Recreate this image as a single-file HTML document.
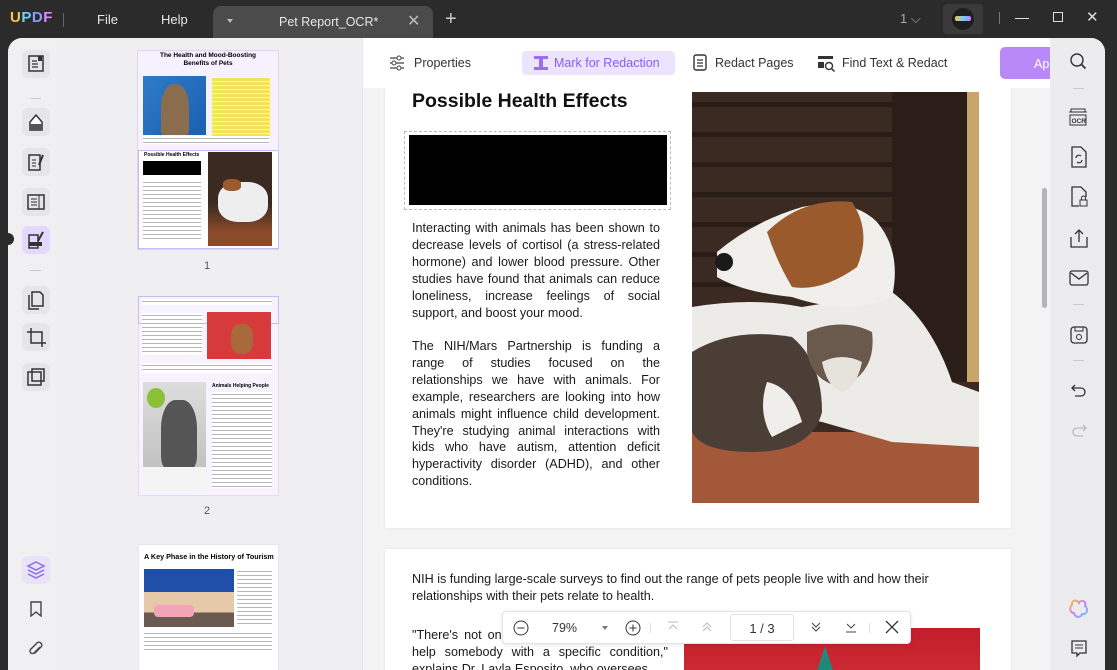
<!DOCTYPE html>
<html><head><meta charset="utf-8"><style>
*{margin:0;padding:0;box-sizing:border-box}
body{width:1117px;height:670px;overflow:hidden;background:#2b2b2b;font-family:"Liberation Sans",Arial,sans-serif;position:relative}
.abs{position:absolute}
.tb{color:#e8e8e8;font-size:13px}
.main{left:8px;top:38px;width:1097px;height:632px;background:#f0f0f2;border-radius:14px 14px 0 0;overflow:hidden}
.rail{left:0;top:0;width:54px;height:632px;background:#f0f0f2}
.thumbs{left:54px;top:0;width:301px;height:632px;background:#efeff1;border-right:1px solid #e6e6e8}
.ico{position:absolute;left:14px;width:28px;height:28px;border-radius:6px}
.tool{top:0;left:355px;width:687px;height:50px;background:#fff}
.doc{left:355px;top:50px;width:687px;height:582px;background:#f3f3f3;overflow:hidden}
.page{position:absolute;background:#fff;box-shadow:0 0 3px rgba(0,0,0,.08)}
.txt{font-size:12.6px;line-height:16.9px;color:#1a1a1a;text-align:justify;font-family:"Liberation Sans",Arial,sans-serif}
.rr{left:1042px;top:0;width:55px;height:632px;background:#ececef}
.lines{background:repeating-linear-gradient(#fff 0 2px,#b8b8b8 2px 3px,#fff 3px 4px)}
</style></head><body>
<div class="abs" style="left:10px;top:9px;font-weight:bold;font-size:15px;letter-spacing:0.5px"><span style="color:#f5c542">U</span><span style="color:#6fd0ff">P</span><span style="color:#8a9bff">D</span><span style="color:#d98bff">F</span></div>
<div class="abs" style="left:63px;top:13px;width:1px;height:14px;background:#666"></div>
<div class="abs tb" style="left:97px;top:12px">File</div>
<div class="abs tb" style="left:161px;top:12px">Help</div>
<div class="abs" style="left:213px;top:6px;width:220px;height:34px;background:#4b4b4b;border-radius:8px 8px 0 0"></div>
<div class="abs" style="left:227px;top:19px;width:0;height:0;border-left:3px solid transparent;border-right:3px solid transparent;border-top:4px solid #bbb"></div>
<div class="abs tb" style="left:279px;top:15px;font-size:12.5px">Pet Report_OCR*</div>
<div class="abs" style="left:407px;top:11px;color:#bbb;font-size:16px">✕</div>
<div class="abs" style="left:445px;top:8px;color:#ccc;font-size:20px;font-weight:300">+</div>
<div class="abs tb" style="left:900px;top:11px;color:#aaa">1 ⌵</div>
<div class="abs" style="left:943px;top:4px;width:40px;height:30px;background:#3a3a3a;border-radius:4px"></div>
<div class="abs" style="left:952px;top:8px;width:22px;height:22px;border-radius:50%;background:#1e1e1e"></div>
<div class="abs" style="left:955px;top:16px;width:16px;height:5px;background:linear-gradient(90deg,#f5c542,#6fd0ff,#c77dff);border-radius:2px"></div>
<div class="abs" style="left:999px;top:12px;width:1px;height:12px;background:#777"></div>
<div class="abs" style="left:1015px;top:18px;width:14px;height:1px;background:#ddd"></div>
<div class="abs" style="left:1053px;top:12px;width:10px;height:10px;border:1px solid #ddd"></div>
<div class="abs" style="left:1086px;top:8px;color:#ddd;font-size:15px">✕</div>

<div class="abs main">
 <div class="abs rail">
  <div class="ico" style="top:12px;background:#e6e6ea"><svg width="28" height="28"><rect x="7" y="6" width="14" height="15" fill="none" stroke="#333" stroke-width="1.5"/><path d="M10 11h5M10 14h6M10 17h6" stroke="#333" stroke-width="1.3"/><rect x="16" y="6" width="4" height="5" fill="#333"/></svg></div>
  <div class="abs" style="left:22px;top:60px;width:11px;height:1px;background:#ccc"></div>
  <div class="ico" style="top:70px;background:#e6e6ea"><svg width="28" height="28"><path d="M8 22V14l6-7 6 7v8z" fill="#fff" stroke="#333" stroke-width="1.5"/><rect x="8" y="16" width="12" height="6" fill="#555"/></svg></div>
  <div class="ico" style="top:110px;background:#e6e6ea"><svg width="28" height="28"><path d="M7 7h11v15H7z" fill="none" stroke="#333" stroke-width="1.5"/><path d="M10 12h4M10 15h4M10 18h4" stroke="#333"/><path d="M17 17l4-10" stroke="#333" stroke-width="2"/></svg></div>
  <div class="ico" style="top:150px;background:#e6e6ea"><svg width="28" height="28"><rect x="6" y="7" width="16" height="14" fill="none" stroke="#333" stroke-width="1.5"/><path d="M9 11h6M9 14h6M9 17h6M17 7v14" stroke="#333"/></svg></div>
  <div class="abs" style="left:0;top:195px;width:6px;height:12px;background:#2b2b2b;border-radius:0 6px 6px 0"></div>
  <div class="ico" style="top:188px;background:#e3d9ff"><svg width="28" height="28"><path d="M7 9h9v13H7z" fill="none" stroke="#333" stroke-width="1.5"/><rect x="7" y="16" width="13" height="4" fill="#333"/><path d="M16 15l5-9" stroke="#333" stroke-width="2"/></svg></div>
  <div class="abs" style="left:22px;top:232px;width:11px;height:1px;background:#ccc"></div>
  <div class="ico" style="top:248px;background:#e6e6ea"><svg width="28" height="28"><path d="M10 6h8l3 3v11h-11z M7 9v14h10" fill="none" stroke="#333" stroke-width="1.5"/></svg></div>
  <div class="ico" style="top:285px;background:#e6e6ea"><svg width="28" height="28"><path d="M9 5v15h15M5 9h15v15" fill="none" stroke="#333" stroke-width="1.5"/></svg></div>
  <div class="ico" style="top:325px;background:#e6e6ea"><svg width="28" height="28"><rect x="6" y="9" width="13" height="13" fill="none" stroke="#333" stroke-width="1.5"/><rect x="10" y="6" width="12" height="12" fill="none" stroke="#333" stroke-width="1.5"/></svg></div>
  <div class="ico" style="top:518px;background:#e8e3f7"><svg width="28" height="28"><path d="M14 6l8 4-8 4-8-4z" fill="none" stroke="#8a6df0" stroke-width="1.5"/><path d="M6 14l8 4 8-4M6 18l8 4 8-4" fill="none" stroke="#8a6df0" stroke-width="1.5"/></svg></div>
  <svg class="abs" style="left:22px;top:563px" width="12" height="16"><path d="M1 1h10v14l-5-4-5 4z" fill="none" stroke="#444" stroke-width="1.4"/></svg>
  <svg class="abs" style="left:20px;top:602px" width="16" height="18"><path d="M12 7l-6 6a2.5 2.5 0 01-3.5-3.5l7-7a3 3 0 014 4l-7 7" fill="none" stroke="#444" stroke-width="1.4"/></svg>
 </div>
 <div class="abs thumbs">
  <div class="abs" style="left:75px;top:12px;width:142px;height:200px;background:#f5f1ff;border:1px solid #ddd5f3"></div>
  <div class="abs" style="left:78px;top:14px;width:136px;font-size:6.5px;font-weight:bold;text-align:center;line-height:8px">The Health and Mood-Boosting<br>Benefits of Pets</div>
  <div class="abs" style="left:81px;top:38px;width:63px;height:59px;background:linear-gradient(135deg,#2e7cc9,#1b5fb0)"><div style="position:absolute;left:18px;top:8px;width:28px;height:51px;background:#8a6d4d;border-radius:45% 45% 10% 10%"></div></div>
  <div class="abs" style="left:150px;top:40px;width:58px;height:58px;background:repeating-linear-gradient(#f2e45a 0 3px,#faf5c0 3px 4px)"></div>
  <div class="abs lines" style="left:81px;top:98px;width:126px;height:8px"></div>
  <div class="abs" style="left:76px;top:112px;width:141px;height:99px;background:#fff;border:1px solid #c9b9f5"></div>
  <div class="abs" style="left:82px;top:114px;font-size:5px;font-weight:bold">Possible Health Effects</div>
  <div class="abs" style="left:81px;top:123px;width:58px;height:14px;background:#000"></div>
  <div class="abs lines" style="left:81px;top:142px;width:58px;height:60px"></div>
  <div class="abs" style="left:146px;top:114px;width:64px;height:94px;background:linear-gradient(#3a2a22 0 55%,#8b4a2a 85%)"><div style="position:absolute;left:10px;top:30px;width:50px;height:40px;background:#eee;border-radius:40%"></div><div style="position:absolute;left:15px;top:27px;width:18px;height:12px;background:#9a5a2c;border-radius:40%"></div></div>
  <div class="abs" style="left:142px;top:222px;font-size:11px;color:#555">1</div>
  <div class="abs" style="left:76px;top:258px;width:141px;height:200px;background:#f6f3ff;border:1px solid #e3dbf7"></div>
  <div class="abs" style="left:76px;top:258px;width:141px;height:28px;border:1px solid #c9b9f5"></div>
  <div class="abs lines" style="left:80px;top:261px;width:130px;height:6px"></div>
  <div class="abs lines" style="left:80px;top:275px;width:60px;height:42px"></div>
  <div class="abs" style="left:145px;top:274px;width:64px;height:47px;background:#d63a3a"><div style="position:absolute;left:24px;top:12px;width:22px;height:30px;background:#a86a3a;border-radius:40%"></div></div>
  <div class="abs lines" style="left:80px;top:325px;width:130px;height:10px"></div>
  <div class="abs" style="left:81px;top:344px;width:63px;height:108px;background:linear-gradient(#ddd,#bbb)"><div style="position:absolute;left:18px;top:18px;width:36px;height:70px;background:#555;border-radius:40% 40% 20% 20%"></div><div style="position:absolute;left:4px;top:6px;width:18px;height:20px;background:#8cbf3a;border-radius:50%"></div><div style="position:absolute;left:0;top:85px;width:63px;height:23px;background:#f4f4f4"></div></div>
  <div class="abs" style="left:150px;top:345px;font-size:5px;font-weight:bold">Animals Helping People</div>
  <div class="abs lines" style="left:150px;top:354px;width:60px;height:96px"></div>
  <div class="abs" style="left:142px;top:467px;font-size:11px;color:#555">2</div>
  <div class="abs" style="left:76px;top:506px;width:141px;height:140px;background:#fff;border:1px solid #e6e6e6"></div>
  <div class="abs" style="left:82px;top:514px;font-size:7.2px;font-weight:bold">A Key Phase in the History of Tourism</div>
  <div class="abs" style="left:82px;top:531px;width:90px;height:58px;background:linear-gradient(#1f4fa8 0 40%,#e6c9a8 40% 75%,#6a5a50 75%)"><div style="position:absolute;left:10px;top:36px;width:40px;height:12px;background:#f2a5b8;border-radius:4px"></div></div>
  <div class="abs lines" style="left:175px;top:531px;width:35px;height:58px"></div>
  <div class="abs lines" style="left:82px;top:593px;width:128px;height:20px"></div>
 </div>
 <div class="abs tool">
  <svg class="abs" style="left:26px;top:17px" width="16" height="16"><path d="M1 3h14M1 8h14M1 13h14" stroke="#444" stroke-width="1.2"/><circle cx="10" cy="3" r="2" fill="#fff" stroke="#444"/><circle cx="5" cy="8" r="2" fill="#fff" stroke="#444"/><circle cx="10" cy="13" r="2" fill="#fff" stroke="#444"/></svg>
  <div class="abs" style="left:51px;top:18px;font-size:12.5px;color:#333">Properties</div>
  <div class="abs" style="left:159px;top:13px;width:153px;height:24px;background:#ece3ff;border-radius:4px"></div>
  <svg class="abs" style="left:170px;top:17px" width="16" height="16"><rect x="1" y="1" width="14" height="3" fill="#9b6df0"/><rect x="6" y="4" width="4" height="8" fill="#9b6df0"/><rect x="1" y="12" width="14" height="3" fill="#9b6df0"/></svg>
  <div class="abs" style="left:191px;top:18px;font-size:12.5px;color:#8b5cf0">Mark for Redaction</div>
  <svg class="abs" style="left:329px;top:16px" width="16" height="18"><rect x="2" y="1" width="12" height="15" rx="2" fill="none" stroke="#333" stroke-width="1.4"/><path d="M5 6h6M5 9h6M5 12h6" stroke="#333" stroke-width="1.3"/></svg>
  <div class="abs" style="left:352px;top:18px;font-size:12.5px;color:#333">Redact Pages</div>
  <svg class="abs" style="left:454px;top:16px" width="20" height="18"><rect x="1" y="2" width="15" height="3" fill="#333"/><rect x="1" y="8" width="6" height="6" fill="#333"/><circle cx="12" cy="12" r="3.5" fill="none" stroke="#333" stroke-width="1.4"/><path d="M14.5 14.5l3 3" stroke="#333" stroke-width="1.5"/></svg>
  <div class="abs" style="left:479px;top:18px;font-size:12.5px;color:#333">Find Text &amp; Redact</div>
  <div class="abs" style="left:637px;top:9px;width:60px;height:32px;background:#b98af7;border-radius:5px;color:#fff;font-size:12.5px;padding:10px 0 0 34px">Ap</div>
 </div>
 <div class="abs doc">
  <div class="page" style="left:22px;top:0;width:626px;height:440px">
   <div class="abs" style="left:27px;top:2px;font-size:19.5px;font-weight:bold;color:#111">Possible Health Effects</div>
   <div class="abs" style="left:19px;top:43px;width:267px;height:79px;border:1px dashed #bbb"></div>
   <div class="abs" style="left:24px;top:47px;width:258px;height:70px;background:#000"></div>
   <div class="abs txt" style="left:27px;top:132px;width:248px">Interacting with animals has been shown to decrease levels of cortisol (a stress-related hormone) and lower blood pressure. Other studies have found that animals can reduce loneliness, increase feelings of social support, and boost your mood.</div>
   <div class="abs txt" style="left:27px;top:250px;width:248px">The NIH/Mars Partnership is funding a range of studies focused on the relationships we have with animals. For example, researchers are looking into how animals might influence child development. They're studying animal interactions with kids who have autism, attention deficit hyperactivity disorder (ADHD), and other conditions.</div>
   <svg class="abs" style="left:307px;top:4px" width="287" height="411" viewBox="0 0 287 411">
    <rect width="287" height="411" fill="#3b2a22"/>
    <g fill="#2a1c16"><rect y="10" width="200" height="5"/><rect y="40" width="200" height="5"/><rect y="70" width="200" height="5"/><rect y="100" width="200" height="5"/><rect y="130" width="200" height="5"/><rect y="160" width="200" height="5"/><rect y="190" width="200" height="5"/></g>
    <rect x="200" width="75" height="290" fill="#2b1d17"/>
    <rect x="275" width="12" height="290" fill="#c9a56a"/>
    <rect y="340" width="287" height="71" fill="#a3583a"/>
    <path d="M0 215 Q60 205 110 215 L200 200 Q240 230 260 290 L287 300 L287 355 L200 350 L130 330 L0 300z" fill="#ecebe8"/>
    <path d="M25 160 Q60 130 110 115 Q160 105 185 130 Q210 160 200 205 Q160 225 100 205 Q50 200 25 185z" fill="#f0efec"/>
    <path d="M75 140 Q110 105 160 110 Q180 140 165 175 Q130 200 100 195 Q85 170 75 140z" fill="#9a5a2c"/>
    <circle cx="32" cy="170" r="9" fill="#1a1a1a"/>
    <path d="M0 260 Q40 235 100 245 Q130 270 130 320 Q120 360 60 360 Q10 360 0 340z" fill="#4a3e36"/>
    <path d="M115 240 Q150 225 180 240 Q185 280 150 295 Q120 290 115 260z" fill="#6a5a4e"/>
    <path d="M130 270 Q150 260 170 270 Q165 295 150 300 Q135 295 130 270z" fill="#e6e2dc"/>
    <path d="M75 290 Q100 295 110 330 L80 345 Q65 320 75 290z" fill="#efeeeb"/>
   </svg>
  </div>
  <div class="page" style="left:22px;top:461px;width:626px;height:200px">
   <div class="abs" style="left:27px;top:22px;width:560px;font-size:12.6px;line-height:17px;color:#1a1a1a">NIH is funding large-scale surveys to find out the range of pets people live with and how their relationships with their pets relate to health.</div>
   <div class="abs txt" style="left:27px;top:78px;width:256px">"There's not one answer for how a pet can help somebody with a specific condition," explains Dr. Layla Esposito, who oversees</div>
   <div class="abs" style="left:299px;top:79px;width:296px;height:100px;background:linear-gradient(#c21e2a,#d8383f)"><div style="position:absolute;left:128px;top:18px;width:26px;height:40px;background:#1e8a7a;clip-path:polygon(50% 0,100% 100%,0 100%)"></div></div>
  </div>
  <div class="abs" style="left:139px;top:523px;width:409px;height:33px;background:#fff;border:1px solid #e4e4e4;border-radius:4px;box-shadow:0 1px 4px rgba(0,0,0,.1)"></div>
  <svg class="abs" style="left:150px;top:532px" width="16" height="16"><circle cx="8" cy="8" r="7" fill="none" stroke="#333"/><path d="M4.5 8h7" stroke="#333"/></svg>
  <div class="abs" style="left:189px;top:533px;font-size:12.5px;color:#333">79%</div>
  <div class="abs" style="left:239px;top:538px;width:0;height:0;border-left:3px solid transparent;border-right:3px solid transparent;border-top:4px solid #777"></div>
  <svg class="abs" style="left:262px;top:532px" width="16" height="16"><circle cx="8" cy="8" r="7" fill="none" stroke="#333"/><path d="M4.5 8h7M8 4.5v7" stroke="#333"/></svg>
  <div class="abs" style="left:287px;top:535px;width:1px;height:10px;background:#ddd"></div>
  <svg class="abs" style="left:304px;top:533px" width="12" height="12"><path d="M1 1h10M2 8l4-4 4 4" fill="none" stroke="#bbb"/></svg>
  <svg class="abs" style="left:338px;top:533px" width="12" height="12"><path d="M2 6l4-4 4 4M2 10l4-4 4 4" fill="none" stroke="#bbb"/></svg>
  <div class="abs" style="left:367px;top:526px;width:64px;height:27px;border:1px solid #e2e2e2;border-radius:3px;font-size:13px;color:#333;text-align:center;padding-top:6px">1 / 3</div>
  <svg class="abs" style="left:447px;top:533px" width="12" height="13"><path d="M2 2l4 4 4-4M2 6l4 4 4-4" fill="none" stroke="#444"/></svg>
  <svg class="abs" style="left:482px;top:533px" width="12" height="13"><path d="M2 3l4 4 4-4M1 11h10" fill="none" stroke="#444"/></svg>
  <div class="abs" style="left:506px;top:535px;width:1px;height:10px;background:#ddd"></div>
  <svg class="abs" style="left:522px;top:532px" width="14" height="14"><path d="M1 1l12 12M13 1L1 13" stroke="#333" stroke-width="1.3"/></svg>
 </div>
 <div class="abs" style="left:1034px;top:150px;width:5px;height:120px;background:#b5b5b5;border-radius:3px"></div>
 <div class="abs rr">
  <svg class="abs" style="left:19px;top:14px" width="20" height="20"><circle cx="8" cy="8" r="6" fill="none" stroke="#333" stroke-width="1.4"/><path d="M12.5 12.5l4 4" stroke="#333" stroke-width="1.8"/></svg>
  <div class="abs" style="left:23px;top:50px;width:11px;height:1px;background:#ccc"></div>
  <svg class="abs" style="left:18px;top:68px" width="20" height="22"><path d="M3 6V3h14v3M1 6h18" fill="none" stroke="#333"/><rect x="2" y="9" width="16" height="10" fill="none" stroke="#333"/><text x="3.5" y="17" font-size="6.5" font-family="Liberation Sans" font-weight="bold" fill="#333">OCR</text></svg>
  <svg class="abs" style="left:20px;top:108px" width="18" height="22"><path d="M2 1h9l5 5v15H2z" fill="none" stroke="#333" stroke-width="1.3"/><path d="M6 12a3 3 0 015-2M12 14a3 3 0 01-5 2" fill="none" stroke="#333" stroke-width="1.2"/></svg>
  <svg class="abs" style="left:20px;top:148px" width="18" height="22"><path d="M9 20H2V1h9l5 5v5" fill="none" stroke="#333" stroke-width="1.3"/><rect x="10" y="14" width="7" height="6" fill="none" stroke="#333"/><path d="M11.5 14v-2a2 2 0 014 0v2" fill="none" stroke="#333"/></svg>
  <svg class="abs" style="left:20px;top:190px" width="18" height="20"><path d="M1 9v10h16V9M9 14V2M5 6l4-4 4 4" fill="none" stroke="#333" stroke-width="1.3"/></svg>
  <svg class="abs" style="left:19px;top:232px" width="20" height="16"><rect x="1" y="1" width="18" height="14" rx="2" fill="none" stroke="#333" stroke-width="1.3"/><path d="M2 3l8 6 8-6" fill="none" stroke="#333" stroke-width="1.3"/></svg>
  <div class="abs" style="left:23px;top:266px;width:11px;height:1px;background:#ccc"></div>
  <svg class="abs" style="left:20px;top:288px" width="18" height="18"><rect x="1" y="1" width="16" height="16" rx="3" fill="none" stroke="#333" stroke-width="1.3"/><path d="M5 1v4h8V1" fill="none" stroke="#333"/><circle cx="9" cy="11" r="2.5" fill="none" stroke="#333"/></svg>
  <div class="abs" style="left:23px;top:322px;width:11px;height:1px;background:#ccc"></div>
  <svg class="abs" style="left:21px;top:346px" width="16" height="14"><path d="M4 1L1 4l3 3M1 4h9a4 4 0 010 8H4" fill="none" stroke="#333" stroke-width="1.3"/></svg>
  <svg class="abs" style="left:21px;top:386px" width="16" height="14"><path d="M12 1l3 3-3 3M15 4H6a4 4 0 000 8h6" fill="none" stroke="#bbb" stroke-width="1.3"/></svg>
  <svg class="abs" style="left:19px;top:561px" width="20" height="20"><defs><linearGradient id="g" x1="0" y1="0" x2="1" y2="1"><stop offset="0" stop-color="#f5c542"/><stop offset=".5" stop-color="#c77dff"/><stop offset="1" stop-color="#5ad0ff"/></linearGradient></defs><path d="M10 4C8 0 2 1 3 6 0 8 1 14 5 14c1 5 7 5 8 1 5 1 7-5 3-8 2-5-4-7-6-3z" fill="none" stroke="url(#g)" stroke-width="2"/></svg>
  <svg class="abs" style="left:21px;top:602px" width="16" height="18"><path d="M1 1h14v12H9l-3 3v-3H1z" fill="none" stroke="#333" stroke-width="1.3"/><path d="M4 5h8M4 8h8" stroke="#333"/></svg>
 </div>
</div>
</body></html>
